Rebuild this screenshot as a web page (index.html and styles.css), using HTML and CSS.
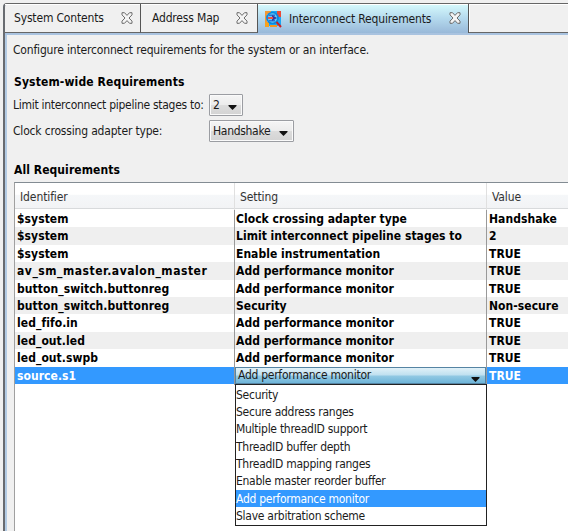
FILE: index.html
```html
<!DOCTYPE html>
<html lang="en">
<head>
<meta charset="utf-8">
<title>Interconnect Requirements</title>
<link rel="stylesheet" href="styles.css">
</head>
<body>
<svg class="defs" width="0" height="0"><defs>
<symbol id="close" viewBox="0 0 12 12"><path d="M1 .7h2.5L6 3.4 8.5.7H11v2.2L8 6l3 3.1v2.2H8.5L6 8.6l-2.5 2.7H1V9.1L4 6 1 2.9z" fill="#f4f4f4" stroke="#6c6c6c" stroke-width="1"/></symbol>
<symbol id="arrow" viewBox="0 0 9 5"><path d="M.5 0h8v1l-4 4-4-4z" fill="#111"/></symbol>
</defs></svg>
<div class="window">
  <nav class="tabs">
    <div class="tab tab-contents"><span>System Contents</span><svg class="close"><use href="#close"/></svg></div>
    <div class="tab tab-map"><span>Address Map</span><svg class="close"><use href="#close"/></svg></div>
    <div class="tab tab-active">
      <svg class="logo" viewBox="0 0 18 18">
        <path d="M4 1h10v15H4z" fill="#1ba6f2"/>
        <path d="M1 1h6v3H3v13H1z" fill="#f09a35"/>
        <path d="M1 12h4v5H1z" fill="#f7a21e"/>
        <path d="M13 1h4v6h-4z" fill="#ed4935"/>
        <path d="M12 7h5v8h-5z" fill="#1ba6f2"/>
        <path d="M6 15h7v2H6z" fill="#f7951e"/>
        <circle cx="8.5" cy="8" r="5.5" fill="#62cdf7" stroke="#0c86df" stroke-width="1.7"/>
        <path d="M5 4.5h6v1.6H5zM5 10h6v1.6H5z" fill="#2b75d5"/>
        <path d="M8 5l5 3-5 3z" fill="#3a3a9e"/>
        <path d="M4 7h5v2H4z" fill="#ef5146"/>
        <path d="M12.5 12l4.5 5" stroke="#c5222a" stroke-width="2"/>
      </svg>
      <span>Interconnect Requirements</span><svg class="close"><use href="#close"/></svg>
    </div>
    <div class="tab-rest"></div>
  </nav>
  <main class="panel">
    <p class="intro">Configure interconnect requirements for the system or an interface.</p>
    <h2>System-wide Requirements</h2>
    <div class="field"><label class="l-limit">Limit interconnect pipeline stages to:</label><div class="combo combo-small"><span>2</span><svg class="arrow"><use href="#arrow"/></svg></div></div>
    <div class="field second"><label class="l-clock">Clock crossing adapter type:</label><div class="combo combo-wide"><span>Handshake</span><svg class="arrow"><use href="#arrow"/></svg></div></div>
    <h2 class="all">All Requirements</h2>
    <section class="table">
      <div class="row head"><div>Identifier</div><div>Setting</div><div>Value</div></div>
      <div class="body">
      <div class="row"><div>$system</div><div>Clock crossing adapter type</div><div>Handshake</div></div>
      <div class="row"><div>$system</div><div>Limit interconnect pipeline stages to</div><div>2</div></div>
      <div class="row"><div>$system</div><div>Enable instrumentation</div><div>TRUE</div></div>
      <div class="row"><div class="wide">av_sm_master.avalon_master</div><div>Add performance monitor</div><div>TRUE</div></div>
      <div class="row"><div>button_switch.buttonreg</div><div>Add performance monitor</div><div>TRUE</div></div>
      <div class="row"><div>button_switch.buttonreg</div><div>Security</div><div>Non-secure</div></div>
      <div class="row"><div>led_fifo.in</div><div>Add performance monitor</div><div>TRUE</div></div>
      <div class="row"><div>led_out.led</div><div>Add performance monitor</div><div>TRUE</div></div>
      <div class="row"><div>led_out.swpb</div><div>Add performance monitor</div><div>TRUE</div></div>
      <div class="row selected"><div>source.s1</div>
        <div class="editor"><div class="editor-box"><span>Add performance monitor</span><svg class="arrow"><use href="#arrow"/></svg></div>
          <ul class="menu"><li>Security</li><li>Secure address ranges</li><li>Multiple threadID support</li><li>ThreadID buffer depth</li><li>ThreadID mapping ranges</li><li>Enable master reorder buffer</li><li class="current">Add performance monitor</li><li>Slave arbitration scheme</li></ul>
        </div><div>TRUE</div></div>
      </div>
    </section>
  </main>
</div>
</body>
</html>
```

FILE: styles.css
```css
* { box-sizing: border-box; }
body { margin: 0; width: 568px; height: 531px; overflow: hidden; background: #f0f0f0; color: #1b1b1b; font: 12px/17px "DejaVu Sans Condensed", "DejaVu Sans", sans-serif; font-stretch: condensed; letter-spacing: -.3px; white-space: nowrap; }
.defs { position: absolute; }
.window { margin: 3px 0 0 3px; height: 528px; border-left: 2px solid #686b70; border-top: 1px solid #666; border-top-left-radius: 4px; display: flex; flex-direction: column; }
.tabs { display: flex; height: 31px; flex: none; border-bottom: 2px solid #a9c3e0; letter-spacing: -.17px; }
.tab { display: flex; align-items: center; justify-content: space-between; height: 29px; border-right: 1px solid #555; border-bottom: 1px solid #666; padding: 1px 7px 0 9px; box-shadow: inset 0 1px #fff; }
.tab-contents { width: 136px; }
.tab-map { width: 117px; padding-left: 11px; padding-right: 9px; }
.tab-active { width: 211px; padding: 1px 7px 0 6px; border-bottom: 0; background: linear-gradient(#d6fafd, #b4d9ed 50%, #99b9d9); }
.tab-rest { flex: 1; height: 29px; border-bottom: 1px solid #666; box-shadow: inset 1px 1px #fff; }
.close { width: 12px; height: 12px; margin-top: -2px; }
.logo { width: 18px; height: 18px; margin-right: 7px; }
.tab-active span { flex: 1; }
.panel { flex: 1; border-left: 2px solid #b3cbe4; padding: 7px 0 0 6px; min-height: 0; display: flex; flex-direction: column; }
.intro { margin: 0 0 15px; letter-spacing: -.17px; }
h2 { margin: 0 0 0 1px; font-size: 12px; line-height: 17px; letter-spacing: .14px; color: #000; }
.field { display: flex; align-items: center; height: 22px; margin-top: 3px; }
.field.second { margin-top: 4px; }
.field label { width: 196px; letter-spacing: -.28px; }
.field .l-clock { letter-spacing: -.18px; }
.combo { height: 22px; border: 1px solid #9b9da2; border-radius: 1px; display: flex; align-items: center; justify-content: space-between; padding: 1px 5px 0 3px; background: linear-gradient(#f5f5f5, #ececec 48%, #dcdcdc 52%, #d3d3d3); box-shadow: inset 0 0 0 1px #fafafa; }
.combo-small { width: 34px; }
.combo-wide { width: 85px; }
.arrow { width: 9px; height: 5px; margin-top: 3px; }
.all { margin-top: 20px; letter-spacing: .07px; }
.table { flex: 1; margin-top: 3px; margin-left: 1px; border-top: 1px solid #838c93; border-left: 1px solid #a0a0a0; background: #fff; }
.row { display: grid; grid-template-columns: 220px 252px 1fr; height: 17.4px; font-weight: bold; color: #000; line-height: 18px; letter-spacing: .03px; }
.row > div { padding-left: 1px; border-right: 1px solid #999; }
.row > div:first-child { padding-left: 2px; letter-spacing: .06px; }
.row > div:last-child { border-right: 0; padding-left: 2px; letter-spacing: .05px; }
.row > div.wide { letter-spacing: .53px; }
.row.head { height: 26px; color: #333; font-weight: normal; line-height: 28px; background: linear-gradient(#fff 45%, #f5f7f9 50%, #f2f3f5); border-bottom: 1px solid #d8dadc; }
.row.head > div { padding-left: 5px !important; letter-spacing: -.1px !important; border-right-color: #e0e0e0; }
.body { padding-top: 1px; }
.body .row:nth-child(even) { background: #efefef; }
.body .row.selected { background: #3399ff; color: #fff; }
.row > .editor { position: relative; padding: 0; font-weight: normal; color: #1b1b1b; letter-spacing: -.27px; }
.editor-box { height: 17px; border: 1px solid #5584a3; padding: 0 5px 0 2px; display: flex; justify-content: space-between; align-items: center; background: linear-gradient(#e1f1f8, #c1e1f0 45%, #91c8e3 55%, #6eb5d9); }
.editor-box .arrow { margin-top: 8px; }
.menu { position: absolute; left: 0; top: 17px; width: 252px; height: 142px; margin: 0; padding: 1px 0 0; list-style: none; border: 1px solid #222; background: #fff; }
.menu li { height: 17.4px; padding-left: 0; line-height: 18px; }
.menu .current { background: #3399ff; color: #fff; }
```
